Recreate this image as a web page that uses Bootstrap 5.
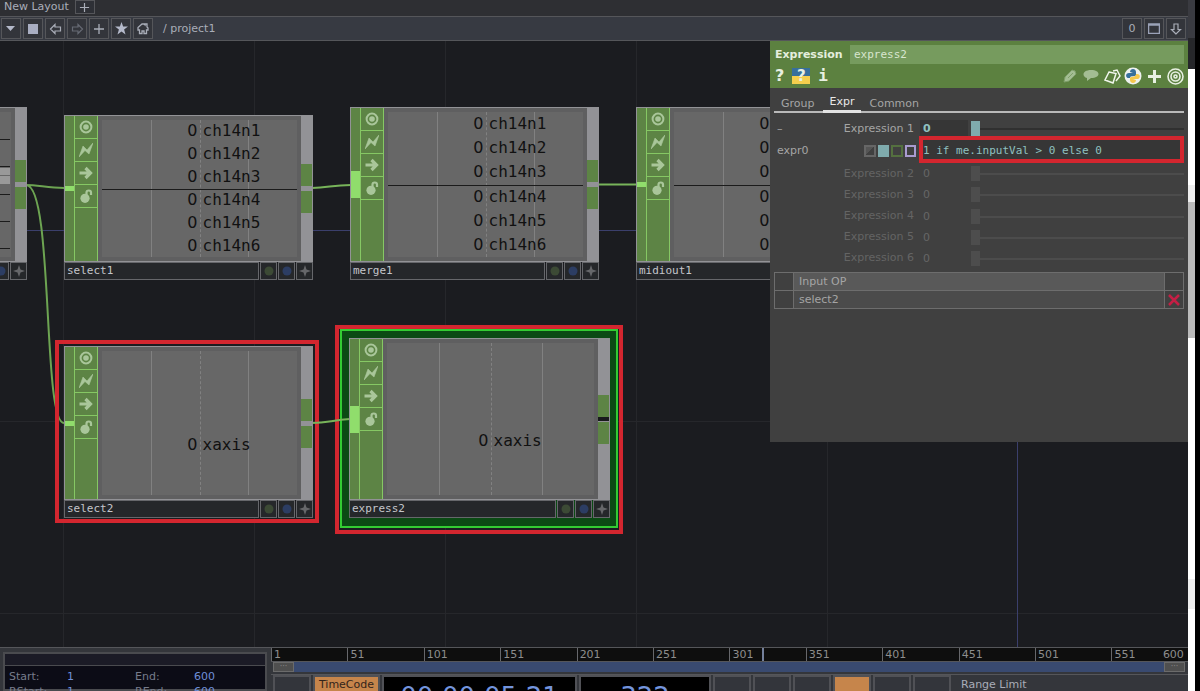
<!DOCTYPE html>
<html lang="en">
<head>
<meta charset="utf-8">
<meta name="viewport" content="width=device-width, initial-scale=1">
<title>project1</title>
<link href="https://cdn.jsdelivr.net/npm/bootstrap@5.3.0/dist/css/bootstrap.min.css" rel="stylesheet">
<style>
:root{--lit:#86c864;--op:#5d8445;--op-icon:#a9c69a;--line:#55565a;--red:#d3262f}
body{background:#000;color:#a9adb8;font-family:"DejaVu Sans",sans-serif;font-size:11px;line-height:14px}
button,input{font:inherit;color:inherit;border-radius:0}
button{padding:0;border:1px solid var(--line);background:#33353b;display:flex;align-items:center;justify-content:center}
input{border:0;outline:0;padding:0;min-width:0}
svg{display:block}
.mono{font-family:"DejaVu Sans Mono",monospace}
/* top bars */
.layouts{height:17px;background:#2e2f33;border-bottom:1px solid var(--line)}
.layouts button{width:20px;height:14px;background:#2e3036;margin-left:6px}
.toolbar{height:24px;background:#373a42;border-bottom:1px solid var(--line);gap:2px;padding:0 2px 0 1px}
.toolbar button{width:20px;height:21px;flex:none}
/* network */
.network{background:#1b1c20;min-height:0}
.opnode{position:absolute;width:249px}
.opnode.wide{width:261px}
.opbody{border:1px solid #929296;background:#5f5f60;height:147px}
.tall{height:155px}.mid{height:154px}.big{height:162px}
.ins{width:10px;background:var(--op);border-right:1px solid var(--lit)}
.ins i{height:5px;background:#90dd6c}
.ins.multi i{height:27px}
.flags{width:23px;background:var(--op);border-right:1px solid var(--lit)}
.flags button{height:23px;border:0;border-bottom:1px solid var(--lit);background:none;color:var(--op-icon)}
.outs{width:11px;background:#929296;gap:5px}
.outs i{height:22px;background:var(--op)}
.wide .outs{background:linear-gradient(#929296 0 49%,#18191c 49% 51%,#929296 51%)}
.plot{margin:4px;background:#676767;color:#111;font:16px/20px "DejaVu Sans Mono",monospace}
.plot b{font:16px/20px "DejaVu Sans",sans-serif;padding-right:2px;margin-right:3px}
.plot .rule{position:absolute;top:0;bottom:0;width:0;border-left:1px solid #818181}
.plot .dash{border-left-style:dashed}
.plot .zero{position:absolute;left:0;right:0;top:50%;border-top:1px solid #1b1b1b}
.single{padding-top:43px}
.opname{height:18px;gap:1px;color:#c4c6cb}
.opname div{border:1px solid #66676b;background:#25272a;padding-left:2px;line-height:16px}
.opname button{width:17px;background:#25272a;border-color:#66676b}
.ring{position:absolute;border:4px solid var(--red)}
.glow{border:2px solid #33cc33;background:#0b4a14}
/* parameters */
.params{position:absolute;top:0;right:0;width:418px;height:401px;background:#404040;color:#a5a5a5}
.phead{background:#5c8140;height:47px;padding:4px 4px 0 5px;color:#e4eedd}
.phead input{background:#769b5e;height:19px;padding-left:4px;color:#d8e6cf}
.phead button{border:0;background:none;color:#e8f0e2}
.tools{gap:3px}
.tools button{width:18px;height:18px}
.ptabs{margin:0 4px;height:25px;border-bottom:2px solid #b9b9b9;padding-top:6px;gap:1px}
.ptabs button{border:0;background:none;height:19px;padding:0 7px}
.ptabs .on{border-bottom:3px solid #e3e3e3;color:#e8e8e8;padding:0 7px}
.plist{height:151px;margin-top:5px;padding:0 4px 0 7px}
.plist label{width:137px}
.plist .val{width:48px;height:18px;margin-left:6px;padding-left:3px;background:#363636;color:#8fc1c0}
.plist .off{color:#646464}
.plist .off .val{background:none;color:#666}
.expr{background:#363636;color:#8fc1c0;border:4px solid var(--red);height:27px;margin:-5px 0 -1px 3px;padding-top:2px}
input[type=range]{appearance:none;background:linear-gradient(#0000 45%,#303030 45% 60%,#0000 60%);height:15px;margin-left:3px}
input[type=range]::-webkit-slider-thumb{appearance:none;width:9px;height:15px;background:#7fabad;border-radius:0}
.off input[type=range]{background:linear-gradient(#0000 45%,#4c4c4c 45% 60%,#0000 60%)}
.off input[type=range]::-webkit-slider-thumb{background:#4d4d4d}
.mode{width:12px;height:12px;border:2px solid #666}
.inputs{margin:3px 4px 0;width:410px;border-collapse:collapse}
.inputs td,.inputs th{border:1px solid #6d6d6d;height:18px;padding:0 0 0 5px;font-weight:400;background:#4b4b4b}
.inputs th{background:#595959}
.inputs .sq{width:19px;background:#404040;padding:0}
.inputs button{border:0;background:none;width:100%}
/* timeline */
.timeline{height:44px;background:#34363b;border-top:1px solid var(--line)}
.range-box{width:264px;margin:4px 4px 0 3px;border:2px solid #4a4b4f;background:#0c0c16;color:#777c8c}
.range-box header{height:12px;background:#1b1b26;border-bottom:1px solid #4a4b4f}
.range-box dl{display:grid;grid-template-columns:58px 68px 59px 1fr;padding:3px 0 0 4px;line-height:15px}
.range-box dt{font-weight:400}.range-box dd{margin:0;color:#6f8fd8}
.ruler{height:14px;background:#0e0e0e;color:#8d8d8d;border-bottom:1px solid var(--line)}
.ruler div{border-left:1px solid #66676b;padding-left:2px;line-height:13px}
.head{position:absolute;top:0;height:13px;width:2px;background:#74809b}
.scroll{height:10px;margin:0 3px 2px 2px;background:#394a70}
.scroll button{width:21px;height:10px;background:#4f4f4f;border-color:#6b6b6b;color:#888;font-size:8px}
.transport{height:45px;padding-left:2px;gap:2px;border-top:1px solid var(--line)}
.transport button{width:38px;height:32px;border-width:2px;border-color:#505156}
.transport .code{width:67px;height:20px;background:#c6854b;color:#33241a}
.transport .readout{background:#000;border:2px solid #505156;color:#7394dc;font-size:26px;line-height:40px;text-align:center;height:44px}
.edge{width:7px;background:#fff;margin-right:5px}
</style>
</head>
<body>
<svg class="d-none">
  <symbol id="i-view" viewBox="0 0 14 14"><circle cx="7" cy="7" r="5.400" fill="none" stroke="currentColor" stroke-width="2"/><circle cx="7" cy="7" r="2.800" fill="currentColor"/></symbol>
  <symbol id="i-bypass" viewBox="0 0 14 14"><path d="M0 14 4 3l4 4L14 0 10 11 6 7.500z" fill="currentColor" stroke="currentColor" stroke-width=".6"/></symbol>
  <symbol id="i-export" viewBox="0 0 14 14"><path d="M.5 7h11M6.500 2 11.500 7l-5 5" fill="none" stroke="currentColor" stroke-width="3.200"/></symbol>
  <symbol id="i-lock" viewBox="0 0 14 14"><circle cx="6" cy="9.300" r="4.600" fill="currentColor"/><path d="M7.500 6V3.500C7.500 .8 12 .8 12 3.500V6" fill="none" stroke="currentColor" stroke-width="2.200"/></symbol>
  <symbol id="i-star4" viewBox="0 0 12 12"><path d="M6 0 7.500 4.500 12 6 7.500 7.500 6 12 4.500 7.500 0 6l4.500-1.500z" fill="#66676a"/></symbol>
  <symbol id="i-arrow" viewBox="0 0 12 12"><path d="M1 6 5.500 1.500V4H11v4H5.500v2.500z" fill="none" stroke="currentColor" stroke-width="1.200"/></symbol>
  <symbol id="i-plus" viewBox="0 0 12 12"><path d="M6 1v10M1 6h10" stroke="currentColor" stroke-width="1.300"/></symbol>
</svg>

<div class="d-flex vh-100 overflow-hidden">
  <main class="d-flex flex-column flex-grow-1 overflow-hidden">
    <div class="layouts d-flex align-items-start ps-1">
      <span style="line-height:13px">New Layout</span>
      <button aria-label="Add layout"><svg width="11" height="11"><use href="#i-plus"/></svg></button>
    </div>
    <nav class="toolbar d-flex align-items-center" aria-label="Path">
      <button aria-label="Menu"><svg width="10" height="6"><path d="M0 0h9L4.500 5z" fill="#b4b9ca"/></svg></button>
      <button aria-label="Stop"><svg width="10" height="10"><path d="M0 0h10v10H0z" fill="#a9aec2"/></svg></button>
      <button aria-label="Back"><svg width="13" height="12"><use href="#i-arrow"/></svg></button>
      <button aria-label="Forward" style="color:#666a74"><svg width="13" height="12"><g transform="rotate(180 6.500 6)"><use href="#i-arrow" width="13" height="12"/></g></svg></button>
      <button aria-label="Add"><svg width="12" height="12"><use href="#i-plus"/></svg></button>
      <button aria-label="Bookmark"><svg width="13" height="13" viewBox="0 0 12 12"><path d="M6 0 7.500 4.200H12L8.400 7 9.700 11.500 6 8.800 2.300 11.500 3.600 7 0 4.200H4.500z" fill="#b4b9ca"/></svg></button>
      <button aria-label="Home"><svg width="12" height="12"><path d="M1 7V4.500L5 1h2l1 1V1h2v3l1 1v2H9.500v3.500H7V8H5v2.500H2.500V7z" fill="none" stroke="#a9adb8" stroke-width="1.300"/></svg></button>
      <span class="ms-1 flex-grow-1 ps-1">/ project1</span>
      <button>0</button>
      <button aria-label="Maximize"><svg width="12" height="11"><path d="M.5 1h11v9.500H.5zM0 2h12" fill="none" stroke="#9ba2b8" stroke-width="1.500"/></svg></button>
      <button aria-label="Split"><svg width="12" height="12"><g transform="rotate(-90 6 6)"><use href="#i-arrow" width="12" height="12"/></g></svg></button>
    </nav>

    <section class="network position-relative flex-grow-1 overflow-hidden" aria-label="Network editor">
      <svg class="position-absolute w-100 h-100" fill="none">
        <path d="M63.500 0v700M254.500 0v700M445.500 0v700M636.500 0v700M827.500 0v700M0 380.500h1400M0 572.500h1400" stroke="#26272b"/>
        <path d="M0 189.500h1400M1017.500 0v700" stroke="#3b3f6c"/>
        <path d="M26 144c12 0 22 3 38 3M26 144c28 0 16 238 38 238" stroke="#6da452" stroke-width="2"/>
      </svg>
      <div id="nodes"></div>
      <aside class="params">
        <header class="phead">
          <div class="d-flex align-items-center">
            <label class="fw-bold" style="width:75px" for="opn">Expression</label>
            <input id="opn" class="mono flex-grow-1" value="express2">
          </div>
          <div class="d-flex align-items-center justify-content-between" style="padding-top:3px">
            <div class="d-flex align-items-center gap-2">
              <button class="fw-bold fs-6" aria-label="Help">?</button>
              <button class="fw-bold" aria-label="Python help" style="width:18px;height:16px;background:linear-gradient(#376f9c 50%,#f5cf4d 50%);font-size:15px">?</button>
              <button class="mono fw-bold fs-6" aria-label="Info">i</button>
            </div>
            <div class="tools d-flex align-items-center">
              <button aria-label="Edit"><svg width="14" height="14"><path d="m1 13 1-5 7-7q4 0 4 4l-7 7zM5 9l5-5" fill="#a3bd93" stroke="#7e9f69"/></svg></button>
              <button aria-label="Comment"><svg width="16" height="12"><path d="M8 0c10 0 10 8 0 8L4 11V8C-2 6 0 0 8 0" fill="#a3bd93"/></svg></button>
              <button aria-label="Tag"><svg width="17" height="15"><path d="m5 3 7 1.500L9 14l-8-3zM9 2l4-1 3 6-4 5" fill="none" stroke="#f0f5ec" stroke-width="1.500"/></svg></button>
              <button aria-label="Python"><svg width="18" height="18" viewBox="0 0 18 18"><circle cx="9" cy="9" r="8.500" fill="#eef1ee"/><path d="M6 5c0-4 6-4 6 0v3c0 2-6 0-6 3-5 1-5-5-1-5h4z" fill="#376f9c"/><path d="M12 13c0 4-6 4-6 0v-2c0-2 6 0 6-4 5-1 5 5 1 5H9z" fill="#f5c84d"/></svg></button>
              <button aria-label="Add"><svg width="13" height="13"><path d="M6.500 0v13M0 6.500h13" stroke="#e8f0e2" stroke-width="3"/></svg></button>
              <button aria-label="Viewer"><svg width="17" height="17" fill="none" stroke="#e8f0e2" stroke-width="1.600"><circle cx="8.500" cy="8.500" r="7.500"/><circle cx="8.500" cy="8.500" r="4.500"/><circle cx="8.500" cy="8.500" r="1.500"/></svg></button>
            </div>
          </div>
        </header>
        <div class="ptabs d-flex"><button>Group</button><button class="on">Expr</button><button>Common</button></div>
        <div class="plist d-flex flex-column" id="plist"></div>
        <table class="inputs">
          <tr><td class="sq"></td><th>Input OP</th><td class="sq"></td></tr>
          <tr><td class="sq"></td><td>select2</td><td class="sq"><button aria-label="Remove select2"><svg width="12" height="12"><path d="m1 1 10 10M11 1 1 11" stroke="#c41f45" stroke-width="2.500"/></svg></button></td></tr>
        </table>
      </aside>
    </section>

    <footer class="timeline d-flex flex-shrink-0 overflow-hidden">
      <div class="range-box flex-shrink-0">
        <header></header>
        <dl><dt>Start:</dt><dd>1</dd><dt>End:</dt><dd>600</dd><dt>RStart:</dt><dd>1</dd><dt>REnd:</dt><dd>600</dd></dl>
      </div>
      <div class="flex-grow-1">
        <div class="ruler d-flex position-relative" id="ruler"></div>
        <div class="scroll d-flex justify-content-between"><button aria-label="Range start">···</button><button aria-label="Range end">···</button></div>
        <div class="transport d-flex">
          <button aria-label="Loop"></button>
          <button class="code">TimeCode</button>
          <div class="readout" style="width:195px">00:00:05:21</div>
          <div class="readout" style="width:132px">322</div>
          <button aria-label="To start"></button><button aria-label="Pause"></button><button aria-label="Reverse"></button>
          <button aria-label="Play" style="background:#c6854b"></button><button aria-label="Step back"></button><button aria-label="Step forward"></button>
          <span class="ms-2 mt-1" style="line-height:12px">Range Limit</span>
        </div>
      </div>
    </footer>
  </main>
  <div class="edge d-flex flex-column flex-shrink-0">
    <div style="height:38px;background:#3a3b41"></div>
    <div style="height:31px;background:#26272a"></div>
    <div style="height:116px"></div>
    <div style="height:17px;background:#eee"></div>
    <div style="height:136px;background:#bbb"></div>
    <div class="flex-grow-1"></div>
    <div style="height:30px;background:#eee;margin-bottom:82px"></div>
  </div>
</div>

<script src="https://cdn.jsdelivr.net/npm/bootstrap@5.3.0/dist/js/bootstrap.bundle.min.js"></script>
<script>
const ch = ['ch14n1','ch14n2','ch14n3','ch14n4','ch14n5','ch14n6'];
const nodes = [
  {name:'', x:-222, y:66, size:'tall', rows:[], faders:true},
  {name:'select1', x:64, y:74, size:'', rows:ch},
  {name:'merge1', x:350, y:66, size:'tall', rows:ch, multi:true},
  {name:'midiout1', x:636, y:66, size:'tall', rows:ch},
  {name:'select2', x:64, y:305, size:'mid', rows:['xaxis']},
  {name:'express2', x:349, y:297, size:'big', rows:['xaxis'], multi:true, wide:true}
];
const flag = (id, label) => `<button aria-label="${label}"><svg width="14" height="14"><use href="#${id}"/></svg></button>`;
const dot = c => `<svg width="10" height="10"><circle cx="5" cy="5" r="4.500" fill="${c}"/></svg>`;
const faders = `<svg class="position-absolute end-0 h-100" width="60"><path d="M0 27.500h59M0 54.500h59M0 82.500h59M0 109.500h59M0 136.500h59" stroke="#1b1b1b"/><path d="M0 56h59v7H0zM0 64h59v8H0z" fill="#999"/></svg>`;
const node = n => `
  <article class="opnode ${n.wide ? 'wide' : ''}" style="left:${n.x}px;top:${n.y}px">
    <div class="opbody ${n.size} d-flex">
      <div class="ins ${n.multi ? 'multi' : ''} d-flex flex-column justify-content-center"><i></i></div>
      <div class="flags d-flex flex-column">${flag('i-view','Viewer')}${flag('i-bypass','Bypass')}${flag('i-export','Export')}${flag('i-lock','Lock')}</div>
      <div class="plot position-relative flex-grow-1 d-flex flex-column ${n.rows.length == 1 ? 'single' : ''}">
        ${n.faders ? faders : '<span class="rule" style="left:25%"></span><span class="rule dash" style="left:50%"></span><span class="rule" style="left:75%"></span>'}
        ${n.rows.length > 1 ? '<span class="zero"></span>' : ''}
        ${n.rows.map(r => `<div class="d-flex flex-fill align-items-center position-relative"><b class="w-50 text-end">0</b><span>${r}</span></div>`).join('')}
      </div>
      <div class="outs d-flex flex-column justify-content-center"><i></i><i></i></div>
    </div>
    <div class="opname mono d-flex"><div class="flex-grow-1">${n.name}</div>
      <button aria-label="Display">${dot('#3c4a35')}</button><button aria-label="Render">${dot('#2c3d63')}</button><button aria-label="Activate"><svg width="12" height="12"><use href="#i-star4"/></svg></button></div>
  </article>`;
document.getElementById('nodes').innerHTML =
  '<div class="ring" style="left:335px;top:284px;width:288px;height:209px"></div><div class="ring glow" style="left:340px;top:288px;width:278px;height:199px"></div>' +
  '<div class="ring" style="left:55px;top:299px;width:264px;height:183px"></div>' +
  `<svg class="position-absolute w-100 h-100" fill="none" stroke="#78b45a" stroke-width="2"><path d="M312 147c16 0 20-3 39-3M598 143.500h38M312 382c16 0 20-3 38-4"/></svg>` +
  nodes.map(node).join('');

const slider = (n, on) => `<div class="d-flex align-items-center flex-fill ${on ? '' : 'off'}">
  <label class="d-flex justify-content-between" for="v${n}"><span>${on ? '–' : ''}</span>Expression ${n}</label>
  <input class="val fw-${on ? 'bold' : 'normal'}" id="v${n}" value="0"><input type="range" class="flex-grow-1" value="0" aria-label="Expression ${n} slider"></div>`;
const expr = `<div class="d-flex align-items-center flex-fill">
  <label for="ex" style="width:87px">expr0</label>
  <div class="d-flex" style="width:52px;gap:2px"><i class="mode" style="background:linear-gradient(135deg,#555 50%,#404040 50%)"></i><i class="mode" style="background:#7fabad;border-color:#7fabad"></i><i class="mode" style="border-color:#54703f"></i><i class="mode" style="border-color:#a99bd0"></i></div>
  <input id="ex" class="expr mono flex-grow-1" value="1 if me.inputVal &gt; 0 else 0"></div>`;
document.getElementById('plist').innerHTML = slider(1, true) + expr + [2,3,4,5,6].map(n => slider(n, false)).join('');

const start = 1, end = 600, frame = 322;
let ticks = '';
for (let f = start; f < end; f += 50)
  ticks += `<div class="d-flex justify-content-between" style="width:${100 / 12}%"><span>${f}</span>${f == 551 ? '<span class="pe-1">600</span>' : ''}</div>`;
document.getElementById('ruler').innerHTML = ticks + `<span class="head" style="left:${(frame - start) / (end - start) * 100}%"></span>`;
</script>
</body>
</html>
